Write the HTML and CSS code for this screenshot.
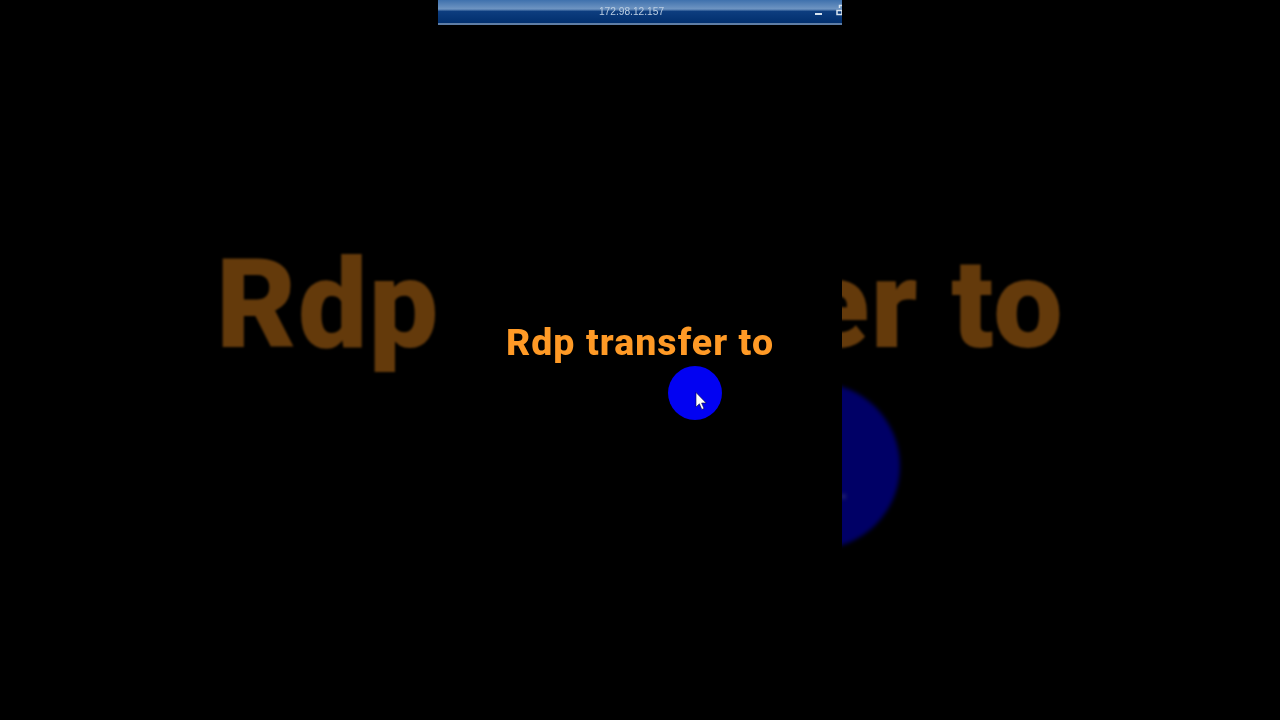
FILE: index.html
```html
<!DOCTYPE html>
<html lang="en">
<head>
<meta charset="utf-8">
<title>Rdp transfer to</title>
<link rel="stylesheet" href="styles.css">
</head>
<body>
<main class="stage">
  <aside class="side side-left">
    <div class="big-text">Rdp</div>
  </aside>
  <section class="phone">
    <header class="titlebar">
      <span class="ip">172.98.12.157</span>
      <span class="min"></span>
      <svg class="restore" width="6" height="12" viewBox="0 0 6 12">
        <path d="M3.5 4V1.5H6M1 6.5H6V10.5H1Z" fill="none" stroke="#d8e4f0" stroke-width="1.5"/>
      </svg>
    </header>
    <div class="content">
      <h1 class="caption">Rdp transfer to</h1>
      <div class="dot">
        <svg class="cursor" width="12" height="19" viewBox="0 0 12 19">
          <path d="M1 0.5V15L4.4 11.8L6.8 17.5L9 16.4L6.6 11H11.2Z" fill="#fff" stroke="#0a0a40" stroke-width="0.6"/>
        </svg>
      </div>
    </div>
  </section>
  <aside class="side side-right">
    <div class="big-text">er to</div>
    <div class="big-dot"><span class="big-cursor"></span></div>
  </aside>
</main>
</body>
</html>
```
FILE: styles.css
```css
* { box-sizing: border-box; }
html, body { margin: 0; height: 100%; background: #000; }
.stage { width: 1280px; height: 720px; background: #000; overflow: hidden; display: grid; grid-template-columns: 438px 404px 438px; font-family: Roboto, "Liberation Sans", sans-serif; }
.side { position: relative; overflow: hidden; display: flex; padding-top: 230px; }
.side-left { justify-content: flex-start; padding-left: 216px; }
.side-right { justify-content: flex-end; padding-right: 216px; }
.big-text { font-size: 123.5px; line-height: 150px; font-weight: 900; letter-spacing: 1.4px; color: #643a0b; white-space: nowrap; filter: blur(0.8px); }
.big-dot { position: absolute; left: -108px; top: 383px; width: 166px; height: 166px; border-radius: 50%; background: #000066; filter: blur(2px); }
.big-cursor { position: absolute; left: 108px; top: 112px; width: 3px; height: 3px; background: #55557f; }
.phone { background: #000; display: flex; flex-direction: column; }
.titlebar { height: 25px; flex: none; position: relative; background: linear-gradient(#3f71ad 0, #6f95c2 9px, #0d3d7f 11.5px, #02306f 22.5px, #5f7ea6 23px, #5f7ea6 25px); }
.ip { position: absolute; left: 0; width: 387px; top: 5px; text-align: center; font-size: 10.2px; line-height: 14px; color: #bccfe3; font-family: "Liberation Sans", sans-serif; filter: blur(0.3px); }
.min { position: absolute; left: 377px; top: 13px; width: 7px; height: 2px; background: #d8e4f0; }
.restore { position: absolute; left: 398px; top: 4px; }
.content { position: relative; flex: 1; }
.caption { margin: 0; padding-top: 295px; text-align: center; font-size: 37.5px; line-height: 44px; font-weight: 800; letter-spacing: 1.05px; color: #ff9a26; white-space: nowrap; filter: blur(0.3px); }
.dot { position: absolute; left: 230px; top: 341px; width: 54px; height: 54px; border-radius: 50%; background: #0202f2; filter: blur(0.4px); }
.cursor { position: absolute; left: 27px; top: 26px; }
```
